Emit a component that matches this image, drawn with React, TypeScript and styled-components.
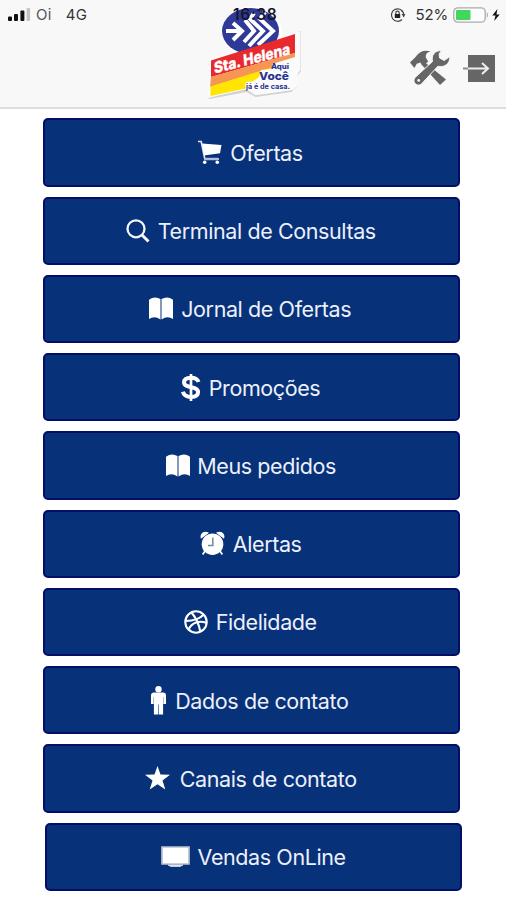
import React from 'react';
import styled, { createGlobalStyle } from 'styled-components';

const GlobalStyle = createGlobalStyle`
  body {
    margin: 0;
    background: #fff;
    font-family: Inter, "Liberation Sans", sans-serif;
  }
  svg { display: block; flex: none; overflow: visible; }
`;

const Screen = styled.div`
  width: 506px;
  height: 900px;
  overflow: hidden;
  background: #fff;
`;

const Header = styled.header`
  position: relative;
  box-sizing: border-box;
  height: 109px;
  background: #f8f8f8;
  border-bottom: 2px solid #dedede;
`;

const StatusBar = styled.div`
  display: flex;
  align-items: center;
  justify-content: space-between;
  height: 29px;
  padding: 0 6px 0 8px;
  color: #333;
  font-size: 15px;
`;

const StatusGroup = styled.div`
  display: flex;
  align-items: center;
`;

const Carrier = styled.span`
  margin-left: 6px;
  letter-spacing: 0.3px;
  color: #555;
`;

const Network = styled.span`
  margin-left: 14px;
  letter-spacing: 0.4px;
`;

const Percent = styled.span`
  margin: 0 5px 0 10px;
  letter-spacing: -0.2px;
`;

const Clock = styled.span`
  position: absolute;
  left: 233px;
  top: 5px;
  font-size: 15.5px;
  line-height: 19px;
  font-weight: 600;
  letter-spacing: 0.6px;
  color: #15152a;
`;

const Brand = styled.svg`
  position: absolute;
  left: 205px;
  top: 5px;
`;

const Actions = styled.div`
  display: flex;
  align-items: center;
  justify-content: flex-end;
  gap: 13px;
  height: 36px;
  margin-top: 21px;
  padding-right: 11px;
`;

const Menu = styled.nav`
  display: flex;
  flex-direction: column;
  align-items: flex-start;
  gap: 10px;
  padding: 9.3px 0 0 43px;
`;

const MenuButton = styled.button<{ $gap: number; $shift?: number }>`
  box-sizing: border-box;
  display: flex;
  align-items: center;
  justify-content: center;
  gap: ${({ $gap }) => $gap}px;
  width: 416.5px;
  height: 68.25px;
  margin: 0 0 0 ${({ $shift = 0 }) => $shift}px;
  padding: 0 1px 0 0;
  border: 2px solid #040d68;
  border-radius: 5px;
  background: #073179;
  color: #edf0fa;
  font: 400 21.5px/28px Inter, "Liberation Sans", sans-serif;
`;

const Label = styled.span<{ $width: number }>`
  display: block;
  width: ${({ $width }) => $width}px;
  padding-top: 1px;
  white-space: nowrap;
  text-align-last: left;
  letter-spacing: -0.4px;
`;

const CartIcon = () => (
  <svg width="24" height="25" viewBox="0 0 24 25">
    <path d="M0 1.5h3.2L6.8 19H21" fill="none" stroke="#dce5f5" strokeWidth="1.7" />
    <path d="M4 3.5 23.5 5 22 13.2 6 15.5Z" fill="#fff" />
    <path d="M6.5 19H20" stroke="#aebddb" strokeWidth="2.5" />
    <circle cx="6.7" cy="22.3" r="1.8" fill="#fff" />
    <circle cx="19.3" cy="22.3" r="1.8" fill="#fff" />
  </svg>
);

const SearchIcon = () => (
  <svg width="24" height="24" viewBox="0 0 24 24" fill="none" stroke="#f4f6fc">
    <circle cx="10" cy="9.8" r="8.5" strokeWidth="2.3" />
    <path d="m16 16 6.5 6.5" strokeWidth="3" />
  </svg>
);

const BookIcon = () => (
  <svg width="24" height="23" viewBox="0 0 24 23" fill="#fff">
    <path d="M0 2.8Q5.5-1.5 11.5 2v20.5Q5.5 18.5 0 22Z" />
    <path d="M12.5 2Q18.5-1.5 24 2.8V22q-5.5-3.5-11.5.5Z" />
  </svg>
);

const DollarIcon = () => (
  <svg width="20" height="27" viewBox="0 0 20 27" fill="none" stroke="#fff">
    <path d="M17.5 8C16.5 4.9 13.5 3.8 10 3.8 5.6 3.8 3.1 5.7 3.1 8.6c0 6.4 14 2.9 14 9.4 0 3.2-2.8 4.9-7 4.9-4.7 0-7.3-1.8-8.2-5.2" strokeWidth="4" />
    <path d="M10 0v27" strokeWidth="2.7" />
  </svg>
);

const AlarmIcon = () => (
  <svg width="25" height="25" viewBox="0 0 25 25">
    <path d="M1 7.8C-1 3 3.8-1.3 9 1.7ZM24 7.8C26 3 21.2-1.3 16 1.7Z" fill="#fff" />
    <path d="m5 20-2.3 3.5M20 20l2.3 3.5" stroke="#fff" strokeWidth="1.8" />
    <circle cx="12.5" cy="13.2" r="10.8" fill="#fff" />
    <path d="M12.8 6.5v8H8" fill="none" stroke="#73859f" strokeWidth="1.5" />
  </svg>
);

const BallIcon = () => (
  <svg width="24" height="24" viewBox="0 0 24 24" fill="none" stroke="#fff" strokeWidth="2.1">
    <circle cx="12" cy="12" r="10.7" />
    <path d="M7.5 2.5c4.2 5 7.5 12 8.8 19M1.5 11c7.7.1 13.8-1.9 18-6.2M4.5 19.5c3.6-7 10.5-9.1 18-6.8" />
  </svg>
);

const PersonIcon = () => (
  <svg width="15" height="29" viewBox="0 0 15 29" fill="#fff">
    <circle cx="7.5" cy="3.2" r="3.2" />
    <path d="M3 6.5h9q3 0 3 3V18h-2.6v-7h-.3v17.5H7.8v-10h-.6v10H2.900V11h-.3v7H0V9.500q0-3 3-3Z" />
  </svg>
);

const StarIcon = () => (
  <svg width="25" height="24" viewBox="0 0 25 24" fill="#fff">
    <path d="m12.5 0 3 8.6 9.5.2-7.5 5.7 2.8 9-7.8-5.3-7.8 5.3 2.8-9L0 8.8l9.5-.2Z" />
  </svg>
);

const TvIcon = () => (
  <svg width="29" height="21" viewBox="0 0 29 21">
    <path d="M1 1h27v17H1Z" fill="#fff" stroke="#b9c2d1" strokeWidth="1.7" />
    <path d="M3 3h23v13H3Z" fill="#fff" />
    <path d="M7 19h15l-3 1.5h-9Z" fill="#fff" stroke="#c7cfdb" />
  </svg>
);

type Item = { label: string; icon: React.ReactNode; gap: number; width: number; shift?: number };

const items: Item[] = [
  { label: 'Ofertas', icon: <CartIcon />, gap: 8, width: 73 },
  { label: 'Terminal de Consultas', icon: <SearchIcon />, gap: 8, width: 218 },
  { label: 'Jornal de Ofertas', icon: <BookIcon />, gap: 8, width: 171 },
  { label: 'Promoções', icon: <DollarIcon />, gap: 8, width: 112 },
  { label: 'Meus pedidos', icon: <BookIcon />, gap: 7, width: 138 },
  { label: 'Alertas', icon: <AlarmIcon />, gap: 8, width: 69 },
  { label: 'Fidelidade', icon: <BallIcon />, gap: 8, width: 102 },
  { label: 'Dados de contato', icon: <PersonIcon />, gap: 9, width: 175 },
  { label: 'Canais de contato', icon: <StarIcon />, gap: 10, width: 177 },
  { label: 'Vendas OnLine', icon: <TvIcon />, gap: 8, width: 148, shift: 2.3 },
];

const SignalIcon = () => (
  <svg width="22" height="13" viewBox="0 0 22 13">
    <rect x="0" y="8.5" width="4" height="4.5" rx="1" fill="#111" />
    <rect x="6" y="6" width="4" height="7" rx="1" fill="#111" />
    <rect x="12.4" y="2.5" width="4" height="10.5" rx="1" fill="#111" />
    <rect x="18.6" y="0" width="3.5" height="13" rx="1" fill="#c4c4c4" />
  </svg>
);

const RotationLockIcon = () => (
  <svg width="16" height="14" viewBox="0 0 16 14" fill="none" stroke="#444" strokeWidth="1.2">
    <path d="M13.5 5A6.2 6.2 0 1 0 12 11.5M11 2.2A6.2 6.2 0 0 1 13.5 9" />
    <path d="m11.5 6 4 .1-2 3Z" fill="#444" stroke="none" />
    <path d="M5.8 6V4.8a1.7 1.7 0 0 1 3.4 0V6" />
    <rect x="4.8" y="6" width="5.4" height="4" fill="#222" stroke="none" />
  </svg>
);

const BatteryIcon = () => (
  <svg width="39" height="16" viewBox="0 0 39 16">
    <rect x=".8" y=".8" width="31.4" height="14.4" rx="4" fill="#fcfcfc" stroke="#aaa" strokeWidth="1.3" />
    <rect x="3" y="3" width="14.5" height="10" rx="1" fill="#43d65c" />
    <path d="M33.8 5q2.5 3 0 6Z" fill="#aaa" />
  </svg>
);

const BoltIcon = () => (
  <svg width="8" height="12" viewBox="0 0 8 13" fill="#111">
    <path d="M5.5 0 0 7h3.5L2 13l6-7H4.5Z" />
  </svg>
);

const ToolsIcon = () => (
  <svg width="40" height="36" viewBox="0 0 40 36">
    <path d="m12 10 24 19.5-6 5.5-19-21Z" fill="#666" />
    <path d="M0 12.5 5.5 7c4-6 9-7.4 15.2-5.7-4.2 1.2-5.4 3.5-4.7 6.7l2.2 3.4-4.8 4.4-3.2-3.3-3.5 1.2-2.3 4.2Z" fill="#666" />
    <path d="M31.5.5c-7 0-10.3 4.7-9 11L5.6 27c-2.2 2.2-2 5-.2 6.8 2 1.9 4.7 1.6 6.7-.5l15.7-17c7 1.3 12-2.4 12.2-9.8l-5.8 4-4.6-2.5-.5-4Z" fill="#666" stroke="#f8f8f8" strokeWidth="1" />
    <circle cx="8.7" cy="30.4" r="1.4" fill="#f8f8f8" />
  </svg>
);

const ExitIcon = () => (
  <svg width="32" height="27" viewBox="0 0 32 27" fill="none">
    <rect x="5" width="27" height="27" fill="#666" />
    <path d="M0 13.5h5" stroke="#8c8c8c" strokeWidth="2" />
    <path d="M5 13.5h20M19 8l6 5.5-6 5.5" stroke="#eee" strokeWidth="2" />
  </svg>
);

const BrandLogo = () => (
  <Brand width="98" height="95" viewBox="205 5 98 95">
    <path d="m208 98 38-9 9 6 35-5 5-5-1-10 4-4V31h2.500v41l-4 4 1 10-6 6-36 5-9-5-37 7Z" fill="#d2d2d2" />
    <ellipse cx="252" cy="31.5" rx="30" ry="25" fill="#fff" />
    <path d="m209 60 91-29v39l-3 5 1 10-5 5-36 5-9-6-39 8Z" fill="#fbfbfb" />
    <ellipse cx="250.5" cy="31" rx="28.5" ry="23" fill="#2f3a98" />
    <g fill="none" stroke="#fff" strokeWidth="4">
      <path d="M226 31h15M233 23l9 8-9 9" />
      <path d="m245 20 9 11-10 11" />
      <path d="m254 13-4 6 13 12-14 15" />
      <path d="m265 12-5 7 13 12-15 14" />
    </g>
    <path d="m211 60.5 84-26.5v19l-84 24Z" fill="#e8292d" />
    <path d="m211 77 84-24v8l-85 26Z" fill="#f79652" />
    <path d="m210.500 86.500 61-19-13 10-12 8-1 3-35 7.500Z" fill="#ffe500" />
    <path d="m272 64 23-7v16l-4 14h-46l1-5 12-1 3-11 11-1Z" fill="#fbfbfb" />
    <g fontFamily="Inter, Liberation Sans, sans-serif" fontWeight="800">
      <text transform="matrix(1 -.255 .08 1 214.500 73.500)" fontSize="15.5" fill="#fff" stroke="#fff" strokeWidth=".35" textLength="76" lengthAdjust="spacingAndGlyphs">Sta. Helena</text>
      <g fill="#29348e">
        <text x="271" y="69" fontSize="7" textLength="18" lengthAdjust="spacingAndGlyphs">Aqui</text>
        <text x="259" y="79.5" fontSize="11" textLength="30" lengthAdjust="spacingAndGlyphs">Você</text>
        <text x="246" y="88.5" fontSize="7" fontWeight="700" textLength="44" lengthAdjust="spacingAndGlyphs">já é de casa.</text>
      </g>
    </g>
  </Brand>
);

export default function App() {
  return (
    <Screen>
      <GlobalStyle />
      <Header>
        <StatusBar>
          <StatusGroup>
            <SignalIcon />
            <Carrier>Oi</Carrier>
            <Network>4G</Network>
          </StatusGroup>
          <StatusGroup>
            <RotationLockIcon />
            <Percent>52%</Percent>
            <BatteryIcon />
            <BoltIcon />
          </StatusGroup>
        </StatusBar>
        <BrandLogo />
        <Clock>16:38</Clock>
        <Actions>
          <ToolsIcon />
          <ExitIcon />
        </Actions>
      </Header>
      <Menu>
        {items.map(({ label, icon, gap, width, shift }) => (
          <MenuButton key={label} $gap={gap} $shift={shift}>
            {icon}
            <Label $width={width}>{label}</Label>
          </MenuButton>
        ))}
      </Menu>
    </Screen>
  );
}
